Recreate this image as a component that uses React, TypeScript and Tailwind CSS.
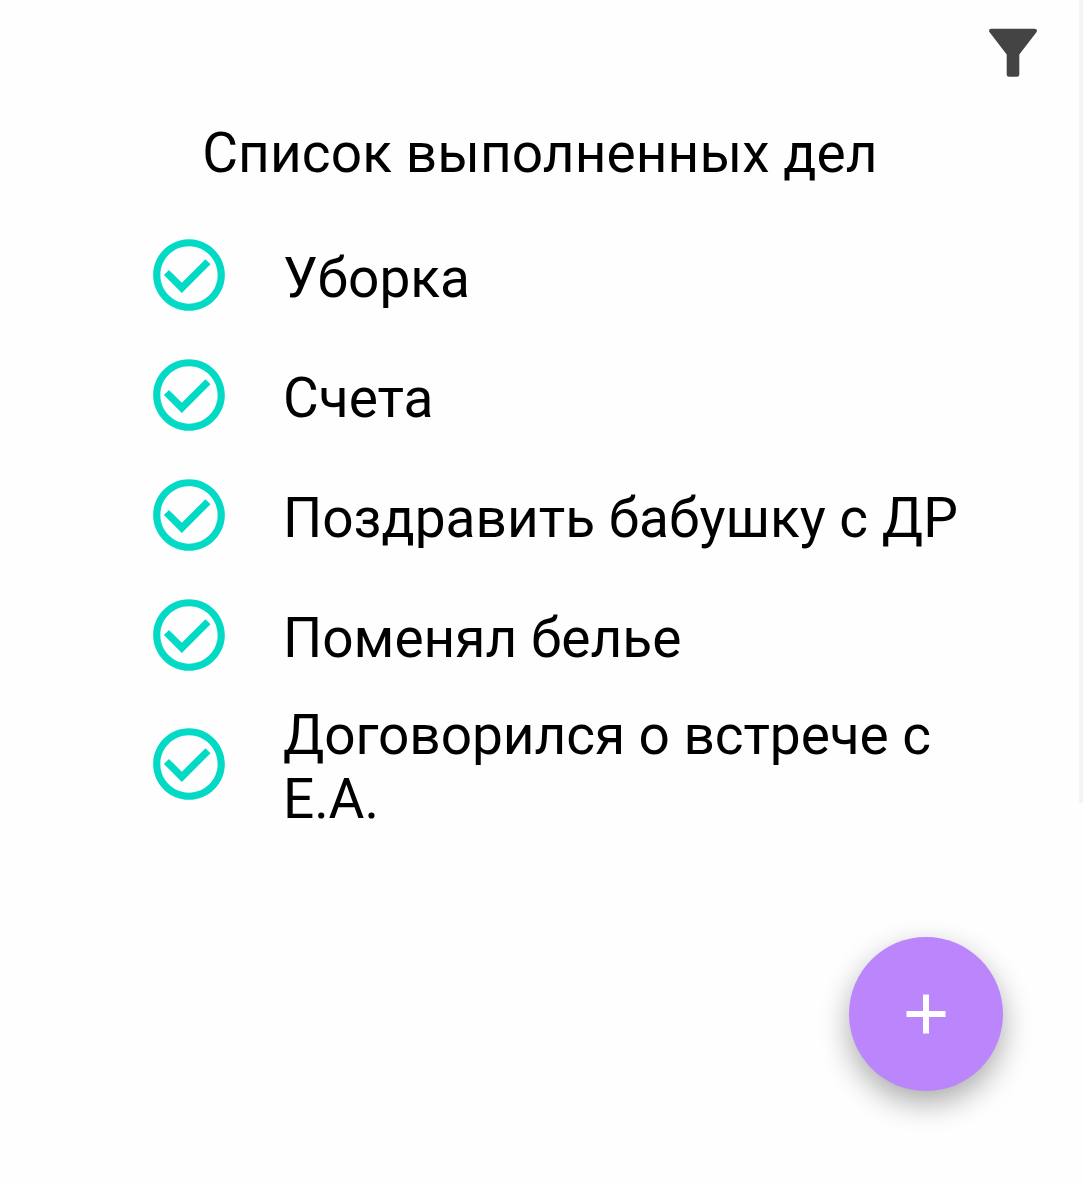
const tasks = [
  { title: 'Уборка' },
  { title: 'Счета' },
  { title: 'Поздравить бабушку с ДР' },
  { title: 'Поменял белье' },
  { title: 'Договорился о встрече с Е.А.', tall: true },
];

function FilterIcon() {
  return (
    <svg viewBox="0 0 48 49" className="h-[49px] w-12" fill="#444444">
      <path d="M2.200 .7H45.800Q48.800 1 47.600 3.900L30.300 26.500V46.400Q30.300 48.700 28 48.700H20Q17.700 48.700 17.700 46.400V26.500L.4 3.900Q-.8 1 2.200 .7Z" />
    </svg>
  );
}

function CheckIcon() {
  return (
    <svg viewBox="0 0 24 24" className="h-[86px] w-[86px] shrink-0" fill="#03dac5">
      <path d="M12 2C6.480 2 2 6.480 2 12s4.480 10 10 10 10-4.480 10-10S17.520 2 12 2zm0 18c-4.410 0-8-3.590-8-8s3.590-8 8-8 8 3.590 8 8-3.590 8-8 8zm4.590-12.420L10 14.170l-3.590-3.580L5 12l5 5 8-8z" />
    </svg>
  );
}

export default function App() {
  return (
    <div className="relative h-[1184px] w-[1083px] overflow-hidden bg-[#fefefe] font-['Roboto',sans-serif] text-black">
      <header className="flex h-[77px] justify-end pt-7 pr-[46px]">
        <button aria-label="Фильтр" className="h-[49px]"><FilterIcon /></button>
      </header>
      <h1 className="mt-[44px] pr-[3px] text-center text-[55px] leading-[64px] tracking-[0.09px]">Список выполненных дел</h1>
      <ul className="mt-[30px] pl-[146px]">
        {tasks.map((t) => (
          <li key={t.title} className={t.tall ? 'flex h-[138px] items-center tracking-[-0.08px]' : 'flex h-[120px] items-center'}>
            <CheckIcon />
            <span className="ml-[51px] w-[700px] pt-[6px] text-[55px] leading-[64px]">{t.title}</span>
          </li>
        ))}
      </ul>
      <div className="absolute top-0 right-0 h-[803px] w-[4px] bg-[#f4f4f4]" />
      <button aria-label="Добавить" className="absolute top-[937px] left-[849px] flex h-[154px] w-[154px] items-center justify-center rounded-full bg-[#bb86fc] shadow-[0_12px_30px_rgba(0,0,0,0.33)]">
        <svg viewBox="0 0 40 40" className="h-10 w-10" fill="white">
          <path d="M17 .5h6V17h16.500v6H23v16.500h-6V23H.5v-6H17z" />
        </svg>
      </button>
    </div>
  );
}
